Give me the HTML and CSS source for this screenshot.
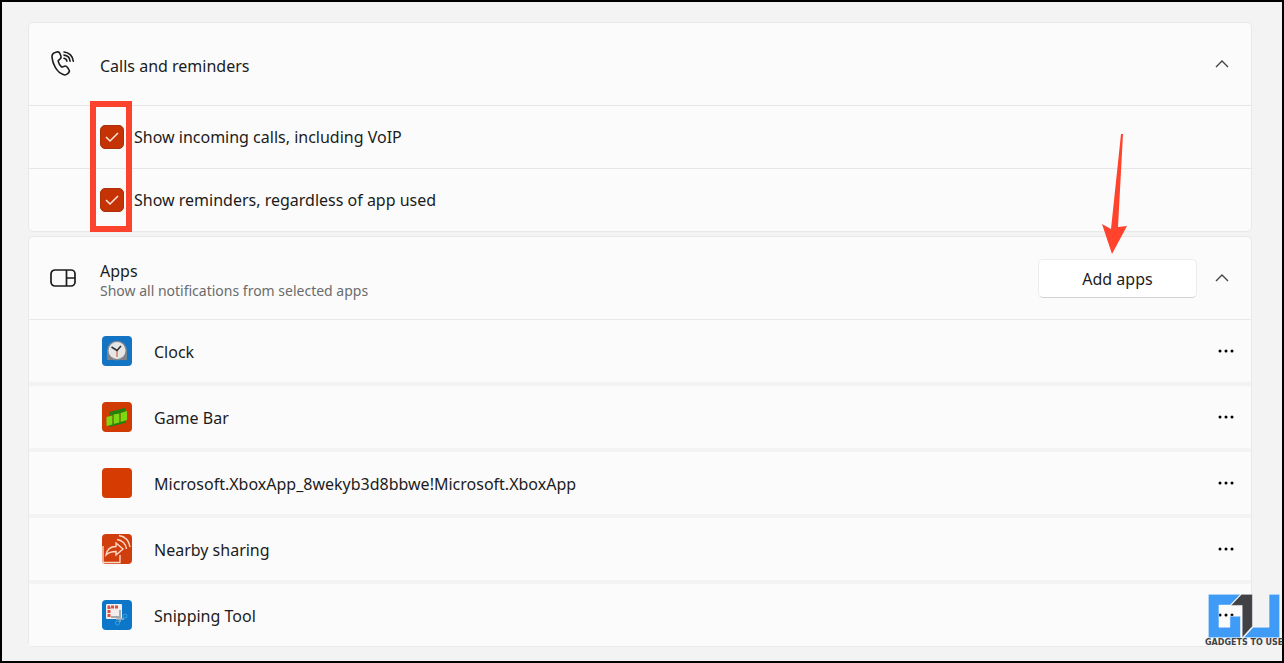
FILE: index.html
```html
<!DOCTYPE html>
<html lang="en">
<head>
    <meta charset="UTF-8">
    <meta name="viewport" content="width=device-width, initial-scale=1.0">
    <title>Priority notifications</title>
    <link rel="stylesheet" href="styles.css">
</head>
<body>
    <main class="page">
        <section class="card">
            <div class="card-header">
                <svg class="header-icon" viewBox="0 0 26 28" fill="none" stroke="#1c1c1c" stroke-width="1.6" stroke-linecap="round" stroke-linejoin="round">
                    <path d="M5.2 2.6 6.8 2.1c1.3-.4 2.6.2 3.1 1.4l1 2.5c.4 1 .2 2.200-.7 2.900l-1.700 1.500c-.3.3-.4.6-.3 1 .5 2 1.600 3.900 3.100 5.300.3.300.700.300 1 .200l2.100-.7c1.100-.4 2.200 0 2.900 1l1.500 2.200c.8 1.100.6 2.500-.3 3.400l-1.100 1c-1.100 1.100-2.700 1.400-4.200.8C6.700 22.200 2.700 14.300 2 7.400 1.800 5.100 3 3.200 5.200 2.600z"/>
                    <path d="M14 8.200c1.600.3 2.700 1.400 2.900 3M14 5.100c3.400.3 5.800 2.700 6.100 6.100M14 2c5.100.3 9 4.200 9.300 9.200"/>
                </svg>
                <div class="header-text">
                    <h2>Calls and reminders</h2>
                </div>
                <button class="chevron" aria-label="Collapse calls and reminders">
                    <svg viewBox="0 0 16 10"><path d="M2 8l6-6 6 6"/></svg>
                </button>
            </div>
            <div class="option">
                <input type="checkbox" id="calls" checked>
                <label for="calls">Show incoming calls, including VoIP</label>
            </div>
            <div class="option">
                <input type="checkbox" id="reminders" checked>
                <label for="reminders">Show reminders, regardless of app used</label>
            </div>
            <div class="highlight"></div>
        </section>

        <section class="card">
            <div class="card-header apps-header">
                <svg class="header-icon" viewBox="0 0 26 28" fill="none" stroke="#1c1c1c" stroke-width="1.7">
                    <rect x="1" y="6" width="24" height="16" rx="4"/>
                    <path d="M16.500 6v16M16.500 14h8.500"/>
                </svg>
                <div class="header-text">
                    <h2>Apps</h2>
                    <p>Show all notifications from selected apps</p>
                </div>
                <div class="add-wrap">
                    <button class="add-button">Add apps</button>
                    <svg class="arrow" viewBox="0 0 26 120"><path d="M20 0h2l-5 93 9-1-15 28L1 90l9 5z" fill="#ff432c"/></svg>
                </div>
                <button class="chevron" aria-label="Collapse apps">
                    <svg viewBox="0 0 16 10"><path d="M2 8l6-6 6 6"/></svg>
                </button>
            </div>
            <ul class="app-list">
                <li>
                    <svg class="app-icon" viewBox="0 0 30 30">
                        <rect width="30" height="30" rx="4" fill="#1474c4"/>
                        <path d="M5 15h20v9H5z" fill="#7b838b"/>
                        <circle cx="15" cy="14.500" r="9.800" fill="#85898e"/>
                        <circle cx="15" cy="14.500" r="8.500" fill="#e6e6e6"/>
                        <path d="M15 14.500V21" stroke="#d4724d" stroke-width="1.300"/>
                        <path d="M9.500 11l5.500 3.500 4-4.500" fill="none" stroke="#303236" stroke-width="1.600"/>
                    </svg>
                    <span class="app-name">Clock</span>
                    <button class="more" aria-label="More options for Clock"><svg viewBox="0 0 16 4"><circle cx="2" cy="2" r="1.500"/><circle cx="8" cy="2" r="1.500"/><circle cx="14" cy="2" r="1.500"/></svg></button>
                </li>
                <li>
                    <svg class="app-icon" viewBox="0 0 30 30">
                        <rect width="30" height="30" rx="4" fill="#cf3b02"/>
                        <path d="M7 10l16-4v4L7 14zM7 22l16-4v3L7 25z" fill="#23820d"/>
                        <path d="M4.500 15l6-1.500v9l-6 1.500zM11.500 12.500l6-1v9l-6 1.500zM18.500 11l6.500-2v9l-6.500 2z" fill="#7ed811"/>
                        <path d="M11 13v9.500M18 11v9.500" stroke="#328f0d"/>
                    </svg>
                    <span class="app-name">Game Bar</span>
                    <button class="more" aria-label="More options for Game Bar"><svg viewBox="0 0 16 4"><circle cx="2" cy="2" r="1.500"/><circle cx="8" cy="2" r="1.500"/><circle cx="14" cy="2" r="1.500"/></svg></button>
                </li>
                <li>
                    <svg class="app-icon" viewBox="0 0 30 30">
                        <rect width="30" height="30" rx="4" fill="#d63b02"/>
                    </svg>
                    <span class="app-name">Microsoft.XboxApp_8wekyb3d8bbwe!Microsoft.XboxApp</span>
                    <button class="more" aria-label="More options for XboxApp"><svg viewBox="0 0 16 4"><circle cx="2" cy="2" r="1.500"/><circle cx="8" cy="2" r="1.500"/><circle cx="14" cy="2" r="1.500"/></svg></button>
                </li>
                <li>
                    <svg class="app-icon" viewBox="0 0 30 30">
                        <rect width="30" height="30" rx="4" fill="#cf3e0c"/>
                        <g fill="none" stroke="#ffd9c8" stroke-width="1.400">
                            <path d="M4 21c1-6 4.500-8.500 10-8.500V9l7 6-7 6v-3.500c-4.500 0-7.500 1-10 3.500z"/>
                            <path d="M1 12v16.500h17V21"/>
                            <path d="M15 5.500c5 .5 9 4.500 9.500 9.500M17 1.500c6 1 10 5.500 11 11.500"/>
                        </g>
                    </svg>
                    <span class="app-name">Nearby sharing</span>
                    <button class="more" aria-label="More options for Nearby sharing"><svg viewBox="0 0 16 4"><circle cx="2" cy="2" r="1.500"/><circle cx="8" cy="2" r="1.500"/><circle cx="14" cy="2" r="1.500"/></svg></button>
                </li>
                <li>
                    <svg class="app-icon" viewBox="0 0 30 30">
                        <rect width="30" height="30" rx="4" fill="#0c76c8"/>
                        <rect x="4" y="4" width="16" height="15" rx="1" fill="#f2eeee"/>
                        <path d="M7 17V7h10" fill="none" stroke="#d9503c" stroke-width="3" stroke-dasharray="3 1"/>
                        <path d="M9 17h9V10" fill="none" stroke="#8e9296" stroke-width="1.500"/>
                        <path d="M18 14v8M14 19h8" stroke="#a8b4bd" stroke-width="1.300"/>
                        <circle cx="15.500" cy="23" r="2" fill="none" stroke="#3aa0df"/>
                        <circle cx="23" cy="16" r="2" fill="none" stroke="#3aa0df"/>
                    </svg>
                    <span class="app-name">Snipping Tool</span>
                    <button class="more" aria-label="More options for Snipping Tool"><svg viewBox="0 0 16 4"><circle cx="2" cy="2" r="1.500"/><circle cx="8" cy="2" r="1.500"/><circle cx="14" cy="2" r="1.500"/></svg></button>
                </li>
            </ul>
        </section>

        <div class="watermark">
            <svg viewBox="54 39 217 127" preserveAspectRatio="none">
                <g stroke="#fff" stroke-width="1.500">
                    <path d="M55 40h97l-31 31H87v64h33v-32h32v62H55z" fill="#3f9bf5"/>
                    <path d="M155 40h33v92l-31 33V72h-34z" fill="#414245"/>
                    <path d="M238 40h32v125H161l29-30h48z" fill="#3f9bf5"/>
                </g>
            </svg>
            <span>GADGETS TO USE</span>
        </div>
    </main>
</body>
</html>
```
FILE: styles.css
```css
* {
    box-sizing: border-box;
}
body {
    margin: 0;
    font-family: "Segoe UI", "Noto Sans", "Open Sans", sans-serif;
    font-size: 16px;
    line-height: 22px;
    color: #1c1c1c;
    background-color: #f3f3f3;
}
.page {
    position: relative;
    min-height: 100vh;
    padding: 20px 30px 14px 26px;
    border: 2px solid #000;
}
.card {
    position: relative;
    background-color: #fbfbfb;
    border: 1px solid #e9e9e9;
    border-radius: 5px;
}
.card + .card {
    margin-top: 4px;
}
.card-header {
    display: flex;
    align-items: center;
    height: 82px;
    padding: 0 21px 0 20px;
}
.header-icon {
    width: 26px;
    height: 28px;
    margin: 0 24px 0 1px;
}
.header-text {
    flex: 1;
    padding-top: 4px;
}
h2 {
    margin: 0;
    font-size: 16px;
    font-weight: 400;
}
.header-text p {
    margin: 0;
    font-size: 14px;
    line-height: 18px;
    color: #6b6b6b;
}

button {
    font: inherit;
    color: inherit;
    border: none;
    background: none;
    padding: 0;
}
.chevron {
    display: flex;
    width: 16px;
}
.chevron svg {
    width: 16px;
    height: 10px;
    fill: none;
    stroke: #444;
    stroke-width: 1.4;
}
.add-wrap {
    position: relative;
    margin-right: 17px;
}
.add-button {
    display: block;
    width: 159px;
    height: 39px;
    padding-top: 2px;
    background-color: #fff;
    border: 1px solid #ececec;
    border-bottom-color: #d2d2d2;
    border-radius: 5px;
}
.arrow {
    position: absolute;
    right: 70px;
    bottom: 44px;
    width: 26px;
    height: 120px;
}

.option {
    display: flex;
    align-items: center;
    height: 63px;
    padding-left: 71px;
    border-top: 1px solid #e6e6e6;
}
.option input {
    appearance: none;
    width: 24px;
    height: 24px;
    margin: 0 10px 0 0;
    border: 1px solid #a8300a;
    border-radius: 5px;
    background: #c53204 url("data:image/svg+xml,%3Csvg xmlns='http://www.w3.org/2000/svg' viewBox='0 0 22 22'%3E%3Cpath d='M5 11l4 4 8-8' fill='none' stroke='%23ffe9df' stroke-width='1.5'/%3E%3C/svg%3E");
}
/* red frame round the two tick boxes */
.highlight {
    position: absolute;
    left: 61px;
    top: 78px;
    width: 42px;
    height: 131px;
    border: 6px solid #fb432e;
    pointer-events: none;
}

.app-list {
    display: flex;
    flex-direction: column;
    gap: 4px;
    margin: 0;
    padding: 0;
    list-style: none;
    background-color: #f3f3f3;
    border-top: 1px solid #e9e9e9;
}
.app-list li {
    display: flex;
    align-items: center;
    height: 62px;
    padding: 0 17px 0 73px;
    background-color: #fbfbfb;
}
.app-icon {
    width: 30px;
    height: 30px;
    margin-right: 22px;
}
.app-name {
    flex: 1;
    padding-top: 2px;
}
.more {
    display: flex;
    width: 16px;
}
.more svg {
    width: 16px;
    height: 4px;
}

.watermark {
    position: absolute;
    right: 0;
    bottom: 13px;
    width: 77px;
    font: bold 8px/10px "DejaVu Sans", sans-serif;
    color: #3f4144;
    white-space: nowrap;
}
.watermark svg {
    display: block;
    width: 72px;
    height: 44px;
    margin-left: 3px;
}
```
